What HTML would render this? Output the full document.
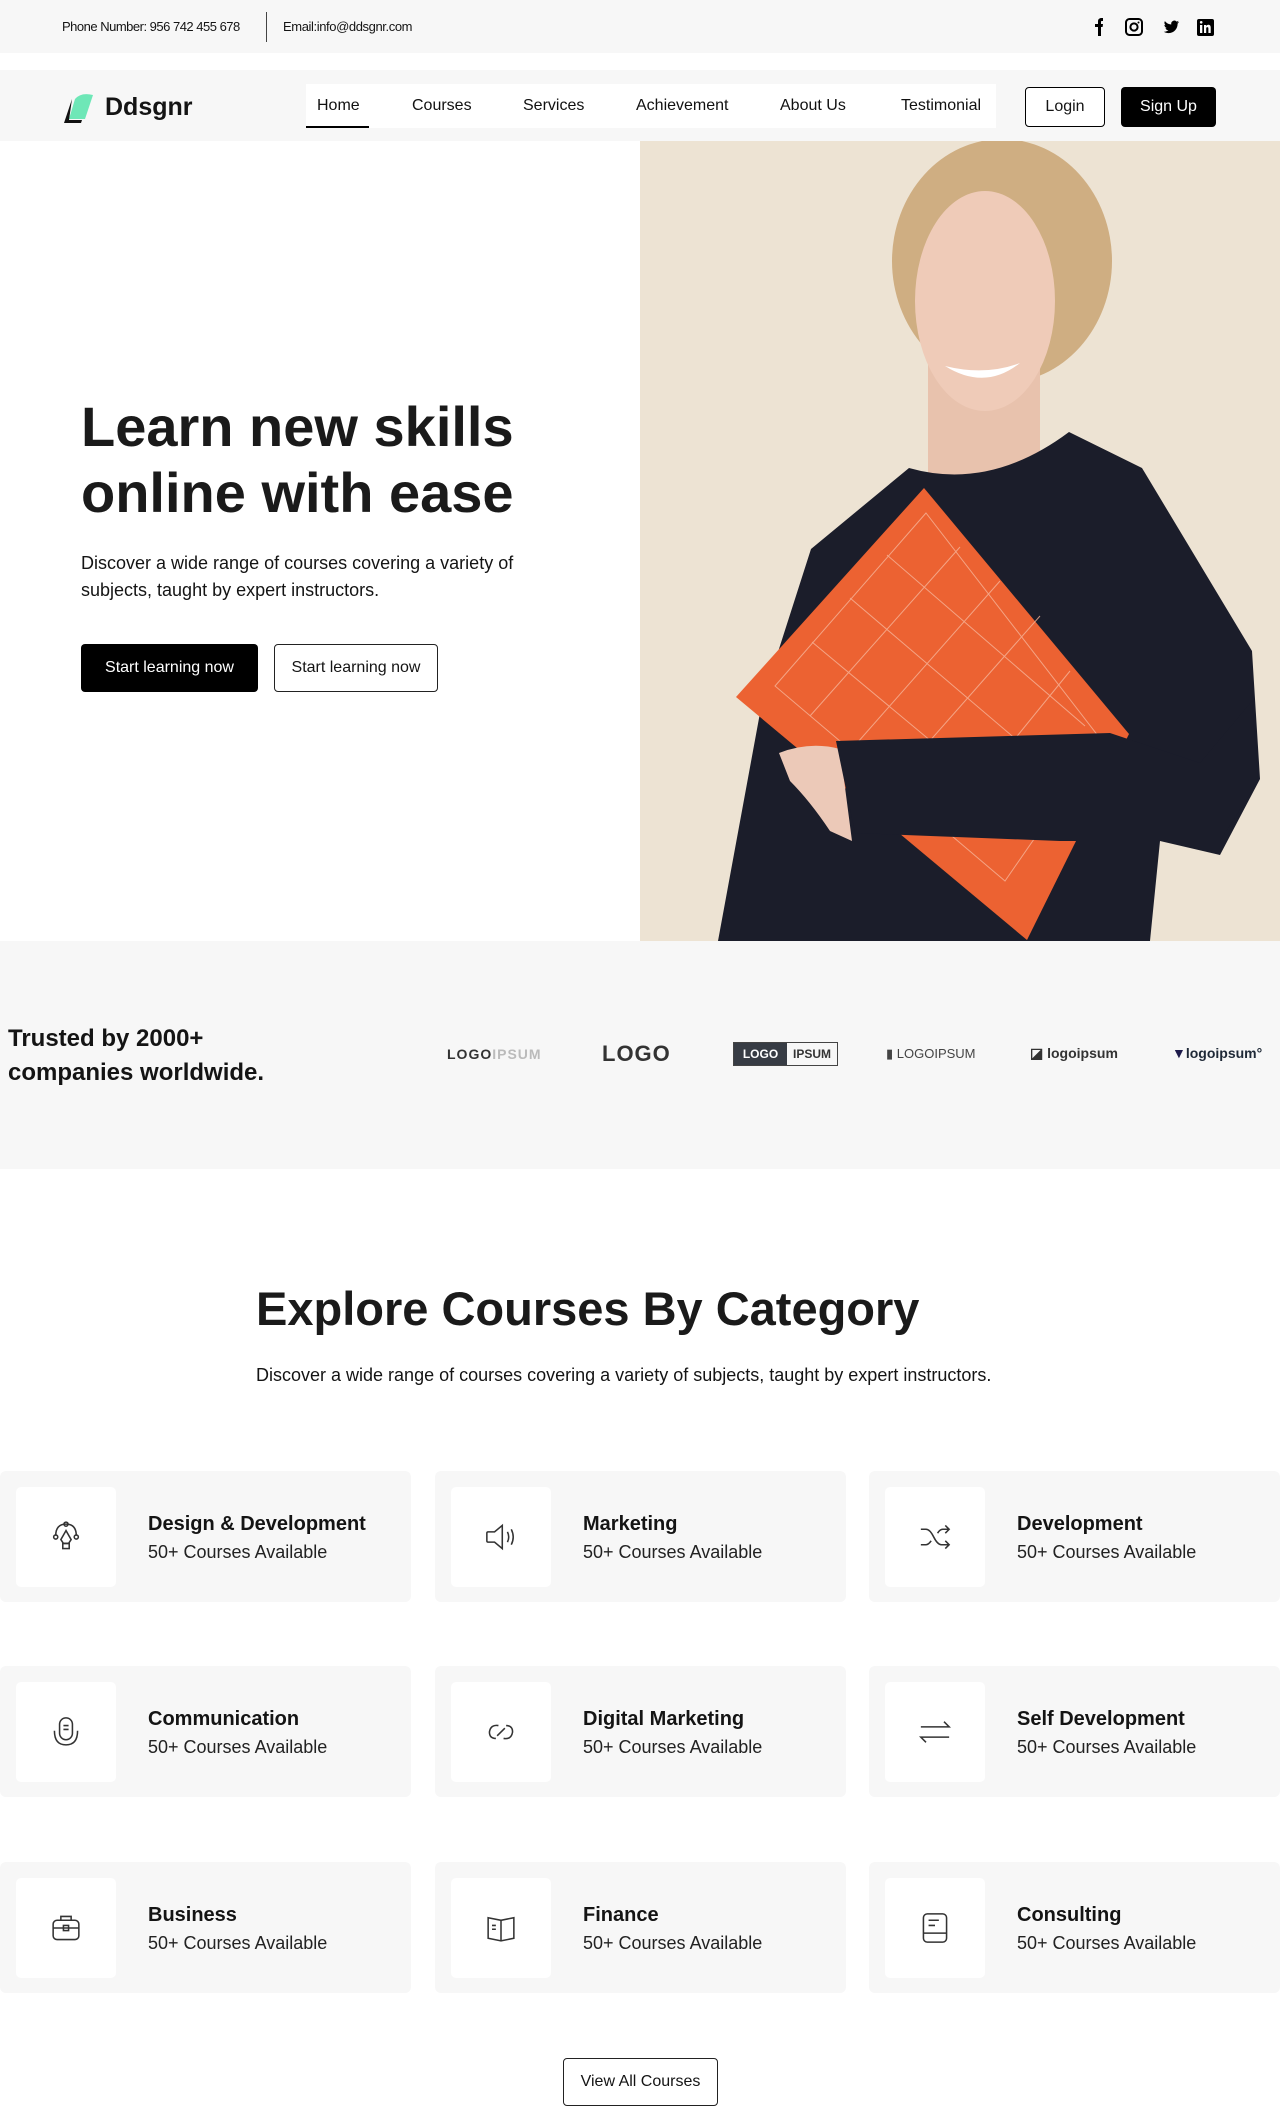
<!DOCTYPE html>
<html><head><meta charset="utf-8"><style>
*{margin:0;padding:0;box-sizing:border-box}
body{width:1280px;height:2113px;position:relative;background:#fff;font-family:"Liberation Sans",Arial,sans-serif;color:#141414;overflow:hidden}
.a{position:absolute;white-space:nowrap}
.nl{position:absolute;top:97px;font-size:16px;color:#111}
.card{position:absolute;width:411px;height:131px;background:#f7f7f7;border-radius:6px}
.card .ib{position:absolute;left:16px;top:16px;width:100px;height:100px;background:#fff;border-radius:5px}
.card .ib svg{position:absolute;left:32px;top:32px}
.card h3{position:absolute;left:148px;top:42px;font-size:20px;font-weight:bold;white-space:nowrap}
.card p{position:absolute;left:148px;top:71px;font-size:18px;white-space:nowrap;color:#222}
.btn{position:absolute;border-radius:4px;font-size:16px;display:flex;align-items:center;justify-content:center}
</style></head><body>
<div class="a" style="left:0;top:0;width:1280px;height:53px;background:#f7f7f7"></div>
<div class="a" style="left:62px;top:19px;font-size:13px;letter-spacing:-0.5px">Phone Number: 956 742 455 678</div>
<div class="a" style="left:266px;top:12px;width:1px;height:30px;background:#444"></div>
<div class="a" style="left:283px;top:19px;font-size:13px;letter-spacing:-0.4px">Email:info@ddsgnr.com</div>
<svg class="a" style="left:1088px;top:16px" width="130" height="22" viewBox="0 0 130 22">
<path d="M10 20V11H7V8h3V5.5C10 3 11.5 2 13.5 2H15v3h-1.2C13 5 13 5.4 13 6v2h2l-.4 3H13v9z" fill="#000"/>
<rect x="38" y="3" width="16" height="16" rx="3.5" fill="none" stroke="#000" stroke-width="2"/><circle cx="46" cy="11" r="3.6" fill="none" stroke="#000" stroke-width="2"/><circle cx="50.5" cy="6.5" r="1" fill="#000"/>
<path d="M91 6c-.6.3-1.2.4-1.8.5.7-.4 1.1-1 1.4-1.7-.6.4-1.3.6-2 .8a3.1 3.1 0 0 0-5.3 2.8c-2.6-.1-4.9-1.4-6.4-3.3-.9 1.5-.4 3.3.9 4.2-.5 0-1-.2-1.4-.4 0 1.5 1.1 2.8 2.5 3.1-.5.1-1 .2-1.4.1.4 1.3 1.6 2.2 2.9 2.2-1.3 1-3 1.6-4.6 1.4 1.4.9 3.1 1.4 4.8 1.4 5.8 0 9-4.9 9-9.1v-.4c.6-.5 1.1-1 1.5-1.6z" fill="#000"/>
<rect x="109" y="3" width="17" height="17" rx="2" fill="#000"/><rect x="112" y="9" width="2.3" height="8" fill="#fff"/><circle cx="113.2" cy="6.3" r="1.3" fill="#fff"/><path d="M116 9h2.1v1.1c.5-.8 1.3-1.3 2.3-1.3 1.7 0 2.3 1.1 2.3 2.9V17h-2.3v-4.4c0-.9-.3-1.5-1.1-1.5-.8 0-1.1.6-1.1 1.5V17H116z" fill="#fff"/>
</svg>
<div class="a" style="left:0;top:70px;width:1280px;height:71px;background:#f7f7f7"></div>
<svg class="a" style="left:63px;top:93px" width="36" height="32" viewBox="0 0 36 32"><path d="M12 6 Q18 -1 30 2 L22 26 L6 26z" fill="#6ee7b7"/><path d="M9 6 L1 30 L18 30 L19 27 L6 27z" fill="#111"/></svg>
<div class="a" style="left:105px;top:93px;font-size:25px;font-weight:bold">Ddsgnr</div>
<div class="a" style="left:306px;top:84px;width:690px;height:44px;background:#fff"></div>
<div class="a" style="left:306px;top:126px;width:63px;height:2px;background:#000"></div>
<div class="nl" style="left:317px">Home</div>
<div class="nl" style="left:412px">Courses</div>
<div class="nl" style="left:523px">Services</div>
<div class="nl" style="left:636px">Achievement</div>
<div class="nl" style="left:780px">About Us</div>
<div class="nl" style="left:901px">Testimonial</div>
<div class="btn" style="left:1025px;top:87px;width:80px;height:40px;border:1px solid #000;background:#fff">Login</div>
<div class="btn" style="left:1121px;top:87px;width:95px;height:40px;background:#000;color:#fff">Sign Up</div>

<svg class="a" style="left:640px;top:141px" width="640" height="800" viewBox="0 0 640 800">
<rect width="640" height="800" fill="#ede3d3"/>
<ellipse cx="362" cy="120" rx="110" ry="122" fill="#cfae82"/>
<rect x="288" y="210" width="112" height="130" fill="#e8c2ad"/>
<ellipse cx="345" cy="160" rx="70" ry="110" fill="#efcbb8"/>
<path d="M305 225 Q345 250 380 222 Q345 235 305 225z" fill="#fff"/>
<path d="M171 408 L269 327 Q350 350 429 291 L502 327 L612 510 L620 638 L580 714 L520 700 L510 800 L78 800 L122 561z" fill="#1b1d2a"/>
<polygon points="284,347 96,556 387,799 489,593" fill="#ec6232"/>
<g stroke="#f6b59a" stroke-width="1" fill="none" opacity=".8">
<polygon points="286,372 135,545 365,740 462,600"/>
<line x1="247" y1="414" x2="445" y2="585"/><line x1="210" y1="457" x2="425" y2="640"/><line x1="172" y1="501" x2="405" y2="695"/>
<line x1="320" y1="406" x2="170" y2="575"/><line x1="360" y1="440" x2="210" y2="610"/><line x1="400" y1="475" x2="250" y2="645"/><line x1="430" y1="530" x2="300" y2="690"/>
</g>
<path d="M139 612 Q170 600 200 608 L212 700 L190 690 Q170 660 150 640z" fill="#ecc9b8"/>
<path d="M196 600 L470 592 L560 622 L612 560 L618 640 L580 700 L420 700 L215 692z" fill="#1b1d2a"/>
</svg>

<div class="a" style="left:81px;top:394px;font-size:56px;font-weight:bold;line-height:66px;color:#1a1a1a">Learn new skills<br>online with ease</div>
<div class="a" style="left:81px;top:550px;font-size:18px;line-height:27px">Discover a wide range of courses covering a variety of<br>subjects, taught by expert instructors.</div>
<div class="btn" style="left:81px;top:644px;width:177px;height:48px;background:#000;color:#fff">Start learning now</div>
<div class="btn" style="left:274px;top:644px;width:164px;height:48px;border:1px solid #222;background:#fff">Start learning now</div>

<div class="a" style="left:0;top:941px;width:1280px;height:228px;background:#f7f7f7"></div>
<div class="a" style="left:8px;top:1022px;font-size:24px;font-weight:bold;line-height:34px">Trusted by 2000+<br>companies worldwide.</div>
<div class="a" style="left:447px;top:1046px;font-size:14px;font-weight:bold;letter-spacing:1px"><span style="color:#333">LOGO</span><span style="color:#bbb">IPSUM</span></div>
<div class="a" style="left:602px;top:1041px;font-size:22px;font-weight:bold;color:#333;letter-spacing:1px">LOGO</div>
<div class="a" style="left:733px;top:1042px;width:105px;height:24px;border:1px solid #444;display:flex;font-size:12px;font-weight:bold"><span style="background:#373c44;color:#fff;width:53px;display:flex;align-items:center;justify-content:center">LOGO</span><span style="color:#333;flex:1;display:flex;align-items:center;justify-content:center">IPSUM</span></div>
<div class="a" style="left:886px;top:1046px;font-size:13px;color:#444">▮ LOGOIPSUM</div>
<div class="a" style="left:1030px;top:1045px;font-size:14px;font-weight:bold;color:#333">◪ logoipsum</div>
<div class="a" style="left:1172px;top:1045px;font-size:14px;font-weight:bold;color:#1f2937"><span style="color:#1e1b4b">▼</span>logoipsum°</div>

<div class="a" style="left:256px;top:1281px;font-size:47px;font-weight:bold;color:#1a1a1a">Explore Courses By Category</div>
<div class="a" style="left:256px;top:1365px;font-size:18px">Discover a wide range of courses covering a variety of subjects, taught by expert instructors.</div>

<div class="card" style="left:0;top:1471px"><div class="ib"><svg width="36" height="36" viewBox="0 0 28 28" fill="none" stroke="#333" stroke-width="1.2"><path d="M6 13 Q6 4 14 4 Q22 4 22 13"/><circle cx="14" cy="4" r="1.6"/><circle cx="6" cy="14" r="1.6"/><circle cx="22" cy="14" r="1.6"/><path d="M14 9 L10 16 L12 19 H16 L18 16z"/><rect x="11.5" y="19" width="5" height="4"/></svg></div><h3>Design &amp; Development</h3><p>50+ Courses Available</p></div>
<div class="card" style="left:435px;top:1471px"><div class="ib"><svg width="36" height="36" viewBox="0 0 28 28" fill="none" stroke="#333" stroke-width="1.2"><path d="M4 10 H9 L15 5 V23 L9 18 H4 Q3 18 3 17 V11 Q3 10 4 10z"/><path d="M19 10 Q21 14 19 18"/><path d="M22 8 Q25 14 22 20"/></svg></div><h3>Marketing</h3><p>50+ Courses Available</p></div>
<div class="card" style="left:869px;top:1471px"><div class="ib"><svg width="36" height="36" viewBox="0 0 28 28" fill="none" stroke="#333" stroke-width="1.2"><path d="M3 8 H7 Q10 8 13 14 Q16 20 19 20 H25"/><path d="M3 20 H7 Q9 20 11 17"/><path d="M16 11 Q18 8 20 8 H25"/><path d="M22 5 L25 8 L22 11"/><path d="M22 17 L25 20 L22 23"/></svg></div><h3>Development</h3><p>50+ Courses Available</p></div>

<div class="card" style="left:0;top:1666px"><div class="ib"><svg width="36" height="36" viewBox="0 0 28 28" fill="none" stroke="#333" stroke-width="1.2"><rect x="9" y="3" width="10" height="17" rx="5"/><path d="M12 9 H16 M12 12 H16"/><path d="M5 13 Q5 24 14 24 Q23 24 23 13"/></svg></div><h3>Communication</h3><p>50+ Courses Available</p></div>
<div class="card" style="left:435px;top:1666px"><div class="ib"><svg width="36" height="36" viewBox="0 0 28 28" fill="none" stroke="#333" stroke-width="1.2"><path d="M12 9 Q6 8 5 14 Q5 19 10 19"/><path d="M16 19 Q22 20 23 14 Q23 9 18 9"/><path d="M11 17 L17 11"/></svg></div><h3>Digital Marketing</h3><p>50+ Courses Available</p></div>
<div class="card" style="left:869px;top:1666px"><div class="ib"><svg width="36" height="36" viewBox="0 0 28 28" fill="none" stroke="#333" stroke-width="1.2"><path d="M3 10 H25 L21 6"/><path d="M25 18 H3 L7 22"/></svg></div><h3>Self Development</h3><p>50+ Courses Available</p></div>

<div class="card" style="left:0;top:1862px"><div class="ib"><svg width="36" height="36" viewBox="0 0 28 28" fill="none" stroke="#333" stroke-width="1.2"><rect x="4" y="8" width="20" height="15" rx="3"/><path d="M10 8 V5 H18 V8"/><path d="M4 14 H24"/><rect x="12" y="12" width="4" height="4"/></svg></div><h3>Business</h3><p>50+ Courses Available</p></div>
<div class="card" style="left:435px;top:1862px"><div class="ib"><svg width="36" height="36" viewBox="0 0 28 28" fill="none" stroke="#333" stroke-width="1.2"><path d="M4 6 L14 8 L24 6 V22 L14 24 L4 22z"/><path d="M14 8 V24"/><path d="M7 12 H10 M7 15 H10"/></svg></div><h3>Finance</h3><p>50+ Courses Available</p></div>
<div class="card" style="left:869px;top:1862px"><div class="ib"><svg width="36" height="36" viewBox="0 0 28 28" fill="none" stroke="#333" stroke-width="1.2"><rect x="5" y="3" width="18" height="22" rx="3"/><path d="M5 18 H23"/><path d="M9 8 H17 M9 12 H14"/></svg></div><h3>Consulting</h3><p>50+ Courses Available</p></div>

<div class="btn" style="left:563px;top:2058px;width:155px;height:48px;border:1px solid #222;background:#fff">View All Courses</div>
</body></html>
